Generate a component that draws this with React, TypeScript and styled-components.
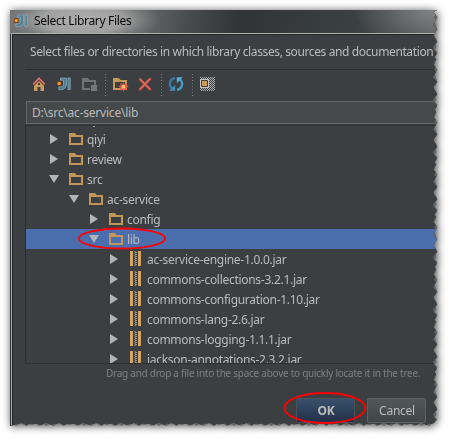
import React from "react";
import styled, { createGlobalStyle } from "styled-components";

const Global = createGlobalStyle`
  body { margin: 0; background: #fff; overflow: hidden; }
  * { box-sizing: border-box; }
`;

const RIGHT = [5, 4, 2, 4, 3, 1, 3, 5, 4, 2, 3, 4, 5, 3, 1, 2, 4, 5, 3, 4, 2];
const BOTTOM = [2, 3, 2, 4, 3, 1, 2, 4, 3, 2, 4, 2, 3, 4, 2];

function tornPolygon(shift: number, inset: number) {
  const points = ["0px 0px", "427px 0px"];
  for (let y = 2, i = shift; y < 411; y += 2.5, i++) {
    points.push(`${422.5 - inset + RIGHT[i % RIGHT.length]}px ${y}px`);
  }
  for (let x = 424, i = shift; x > 3; x -= 2.5, i++) {
    points.push(`${x}px ${412 - inset + BOTTOM[i % BOTTOM.length]}px`);
  }
  points.push("0px 416px");
  return `polygon(${points.join(",")})`;
}

const Stage = styled.main`
  width: 455px;
  height: 443px;
  padding: 10px;
  background: #fff;
`;
const Shadow = styled.div`
  width: 428px;
  height: 417px;
  filter: drop-shadow(1px 1px 4px rgba(0, 0, 0, 0.75));
`;
const TornBack = styled.div`
  width: 428px;
  height: 417px;
  background: #626465;
  clip-path: ${tornPolygon(5, 0)};
`;
const Frame = styled.section`
  width: 428px;
  height: 417px;
  display: flex;
  flex-direction: column;
  clip-path: ${tornPolygon(0, 0.5)};
  background: #3c3f41;
  font-family: "Noto Sans", sans-serif;
  font-size: 12px;
  color: #bbb;
`;
const TitleBar = styled.header`
  flex: 0 0 23px;
  display: flex;
  align-items: center;
  padding: 0 0 2px 3px;
  gap: 5px;
  background:
    radial-gradient(ellipse 78px 24px at 72px 10px, rgba(180,180,180,.95) 0, rgba(168,168,168,.85) 55%, rgba(140,140,140,.4) 82%, transparent 100%),
    radial-gradient(ellipse 85px 45px at 428px 0, #858687, transparent),
    linear-gradient(100deg, #707273 0, #626465 32%, #484b4c 42%, #303435 54%, #3b4040 80%, #45494a 100%);
`;
const Text = styled.span<{ $spacing?: number; $size?: number; $color?: string }>`
  white-space: pre;
  font-size: ${(p) => p.$size ?? 12}px;
  letter-spacing: ${(p) => p.$spacing ?? 0}px;
  color: ${(p) => p.$color ?? "#bbb"};
  line-height: 18px;
`;
const Body = styled.div`
  flex: 1;
  min-height: 0;
  border-left: 1px solid #343739;
  border-top: 1px solid #aeb2b1;
  box-shadow: inset 1px 0 #a9acac, inset 2px 1px #222526;
  padding-left: 14px;
  display: flex;
  flex-direction: column;
`;
const Description = styled.div`
  height: 35px;
  padding: 9px 0 0 5px;
`;
const Toolbar = styled.div`
  height: 32px;
  border-top: 1px solid #2b2d2f;
  display: flex;
  align-items: flex-start;
  padding: 6px 0 0 6px;
`;
const ToolIcon = styled.span<{ $gap: number }>`
  display: flex;
  width: 20px;
  height: 20px;
  margin-right: ${(p) => p.$gap}px;
`;
const Divider = styled.i<{ $gap: number }>`
  width: 1px;
  height: 23px;
  margin-right: ${(p) => p.$gap}px;
  margin-top: -2px;
  background: repeating-linear-gradient(#797b7c 0 1px, transparent 1px 3px);
`;
const PathField = styled.div`
  height: 23px;
  margin-left: 1px;
  border: 1px solid #646667;
  border-right: 0;
  background: #45494a;
  padding: 2px 0 0 5px;
`;
const Tree = styled.div`
  height: 239px;
  margin-top: 1px;
  border: 1px solid #2d3032;
  border-right: 0;
  overflow: hidden;
`;
const HiddenRow = styled.div`
  height: 3px;
  padding-left: 67px;
  display: flex;
  &::before { content: ""; width: 2px; height: 1px; background: #a2a4a5; }
`;
const Row = styled.div<{ $depth: number; $selected?: boolean }>`
  height: 20px;
  padding-left: ${(p) => 23 + p.$depth * 20}px;
  display: flex;
  align-items: center;
  background: ${(p) => (p.$selected ? "#4b6eaf" : "transparent")};
`;
const Label = styled(Text)`
  padding-top: 2px;
`;
const Arrow = styled.svg`
  flex: none;
  width: 10px;
  height: 10px;
  margin-right: 9px;
`;
const Glyph = styled.svg`
  flex: none;
  width: 16px;
  height: 16px;
  margin-right: 3px;
`;
const Hint = styled.div`
  height: 34px;
  padding-left: 81px;
  line-height: 18px;
`;
const Actions = styled.div`
  display: flex;
  gap: 12px;
  padding-left: 271px;
`;
const Button = styled.button<{ $primary?: boolean }>`
  width: 59px;
  height: 25px;
  flex: none;
  padding: 1px 0 0 1px;
  border: 1px solid ${(p) => (p.$primary ? "#4a5258" : "#5e6263")};
  border-radius: 2px;
  background: ${(p) => (p.$primary ? "linear-gradient(#38506c,#233148)" : "linear-gradient(#525759,#404546)")};
  color: #bbb;
  font: ${(p) => (p.$primary ? "bold" : "normal")} 12px/18px "Noto Sans", sans-serif;
  letter-spacing: ${(p) => (p.$primary ? -0.2 : -0.25)}px;
`;
const Ring = styled.svg<{ $x: number; $y: number }>`
  position: absolute;
  left: ${(p) => p.$x}px;
  top: ${(p) => p.$y}px;
  overflow: visible;
  pointer-events: none;
`;

const Logo = () => (
  <svg width="16" height="16" viewBox="0 0 16 16">
    <path d="M4.500 2h6v6c0 3.200-2 5.600-5.200 5.600H2.800v-2.700h2.400c1.600 0 2.300-1 2.300-3V4.200h-3z" fill="#527d92" stroke="#8db1c2" strokeWidth=".7" />
    <rect x="12" y="2" width="2.200" height="11.600" fill="#527d92" stroke="#8db1c2" strokeWidth=".7" />
    <rect x="0.900" y="5" width="4.600" height="5" rx="1" fill="#6d3b15" />
    <circle cx="3.200" cy="7.500" r="1.700" fill="#ff9a22" />
  </svg>
);
const Home = () => (
  <svg width="16" height="16" viewBox="0 0 16 16">
    <path d="M3 8l5-4.500L13 8v7H9.500v-4h-3v4H3z" fill="#c69b60" />
    <path d="M2.200 8.900L8 3l5.800 5.900" fill="none" stroke="#7d3434" strokeWidth="2.600" />
    <path d="M2.200 8.200L8 2.300l5.800 5.900" fill="none" stroke="#dc7f78" strokeWidth="1.500" />
    <path d="M7 7h2v2H7z" fill="#4b3d2d" />
  </svg>
);
const GreyFolder = () => (
  <svg width="17" height="16" viewBox="0 0 17 16">
    <path fillRule="evenodd" d="M1 2h6l1.500 2H15v5h-2V6H3v6h6v2H1z" fill="#6f7172" />
    <path d="M10 9h6v6h-6z" fill="#777" />
  </svg>
);
const NewFolder = () => (
  <svg width="17" height="17" viewBox="0 0 17 17">
    <path fillRule="evenodd" d="M1 2h6l1.500 2H15v10H1zM3 6v6h10V6z" fill="#c69a58" />
    <path d="M11.500 6l1 2.500L15 7l-.7 2.600 2.500 1-2.500 1.200L15 14.500l-2.500-1-1 2.500-1.200-2.500L8 14.500l.7-2.700-2.500-1.200 2.500-1L8 7l2.500 1.500z" fill="#ec544b" />
    <circle cx="11.500" cy="10.800" r="1.900" fill="#ffc568" />
  </svg>
);
const Delete = () => (
  <svg width="16" height="16" viewBox="0 0 16 16">
    <path d="M3 3.500l10 10M13 3L3 13.500" stroke="#963c35" strokeWidth="2.700" strokeLinecap="round" />
    <path d="M3 3.200l10 10M13 2.800L3 13.200" stroke="#e06b5d" strokeWidth="1.700" strokeLinecap="round" />
  </svg>
);
const Refresh = () => (
  <svg width="16" height="16" viewBox="0 0 16 16" fill="none">
    <path d="M7 2.200C2.300 2.800.8 7.500 2.700 11L5 13.400" stroke="#387ca8" strokeWidth="2.300" />
    <path d="M9 13.800c4.700-.6 6.200-5.300 4.300-8.800L11 2.600" stroke="#489aca" strokeWidth="2.300" />
    <path d="M1.200 14.700h6V8.700z" fill="#478db9" />
    <path d="M8.800 1.300h6l-6 6z" fill="#5aabd7" />
  </svg>
);
const ShowHidden = () => (
  <svg width="16" height="16" viewBox="0 0 16 16">
    <defs>
      <pattern id="checks" width="2" height="2" patternUnits="userSpaceOnUse">
        <path d="M0 0h1v1H0zM1 1h1v1H1z" fill="#aaa" />
      </pattern>
    </defs>
    <path d="M1 1h15v14H1z" fill="url(#checks)" shapeRendering="crispEdges" />
    <path d="M1.500 3.500h8v8h-8z" fill="#c79a5e" stroke="#c5c5c5" />
    <path d="M2.500 4.500h6v6h-6z" fill="none" stroke="#4b4139" />
  </svg>
);
const Folder = () => (
  <Glyph viewBox="0 0 16 16">
    <path fillRule="evenodd" d="M1 2h6l1.500 2H15v10H1zM3 6v6h10V6z" fill="#c19656" />
  </Glyph>
);
const Jar = () => (
  <Glyph viewBox="0 0 16 16" shapeRendering="crispEdges">
    <path d="M2 0h3v15H2zM10 0h3v15h-3z" fill="#d4a562" />
    {Array.from({ length: 15 }, (_, y) => (
      <rect key={y} x={y % 2 ? 7 : 6} y={y} width="2" height="1" fill={y % 2 ? "#929597" : "#6e7173"} />
    ))}
  </Glyph>
);

type Item = { name: string; depth: number; open?: boolean; jar?: boolean; selected?: boolean };
const items: Item[] = [
  { name: "qiyi", depth: 0 },
  { name: "review", depth: 0 },
  { name: "src", depth: 0, open: true },
  { name: "ac-service", depth: 1, open: true },
  { name: "config", depth: 2 },
  { name: "lib", depth: 2, open: true, selected: true },
  { name: "ac-service-engine-1.0.0.jar", depth: 3, jar: true },
  { name: "commons-collections-3.2.1.jar", depth: 3, jar: true },
  { name: "commons-configuration-1.10.jar", depth: 3, jar: true },
  { name: "commons-lang-2.6.jar", depth: 3, jar: true },
  { name: "commons-logging-1.1.1.jar", depth: 3, jar: true },
  { name: "jackson-annotations-2.3.2.jar", depth: 3, jar: true },
];

export default function App() {
  return (
    <Stage>
      <Global />
      <Shadow>
        <TornBack>
          <Frame>
            <TitleBar>
              <Logo />
              <Text $color="#080808" $spacing={-0.32}>Select Library Files</Text>
            </TitleBar>
            <Body>
              <Description>
                <Text $spacing={-0.38}>Select files or directories in which library classes, sources and documentation</Text>
              </Description>
              <Toolbar>
                <ToolIcon $gap={5}><Home /></ToolIcon>
                <ToolIcon $gap={5}><Logo /></ToolIcon>
                <ToolIcon $gap={4}><GreyFolder /></ToolIcon>
                <Divider $gap={6} />
                <ToolIcon $gap={5}><NewFolder /></ToolIcon>
                <ToolIcon $gap={4}><Delete /></ToolIcon>
                <Divider $gap={6} />
                <ToolIcon $gap={4}><Refresh /></ToolIcon>
                <Divider $gap={6} />
                <ToolIcon $gap={0}><ShowHidden /></ToolIcon>
              </Toolbar>
              <PathField><Text $spacing={-0.22}>D:\src\ac-service\lib</Text></PathField>
              <Tree>
                <HiddenRow />
                {items.map((item) => (
                  <Row key={item.name} $depth={item.depth} $selected={item.selected}>
                    <Arrow viewBox="0 0 10 10">
                      <path d={item.open ? "M0 1h10L5 9z" : "M1 0l8 5-8 5z"} fill="#b3b4b5" />
                    </Arrow>
                    {item.jar ? <Jar /> : <Folder />}
                    <Label $spacing={-0.29}>{item.name}</Label>
                  </Row>
                ))}
              </Tree>
              <Hint><Text $size={10} $color="#7d8082" $spacing={-0.26}>Drag and drop a file into the space above to quickly locate it in the tree.</Text></Hint>
              <Actions>
                <Button $primary>OK</Button>
                <Button>Cancel</Button>
              </Actions>
            </Body>
          </Frame>
        </TornBack>
      </Shadow>
      <Ring $x={78} $y={228} width="88" height="21">
        <ellipse cx="44" cy="10.500" rx="43.200" ry="10" fill="none" stroke="#f00" strokeWidth="1.900" />
      </Ring>
      <Ring $x={284} $y={393} width="82" height="31">
        <ellipse cx="41" cy="15" rx="40.500" ry="15" fill="none" stroke="#f00" strokeWidth="1.900" />
      </Ring>
    </Stage>
  );
}
